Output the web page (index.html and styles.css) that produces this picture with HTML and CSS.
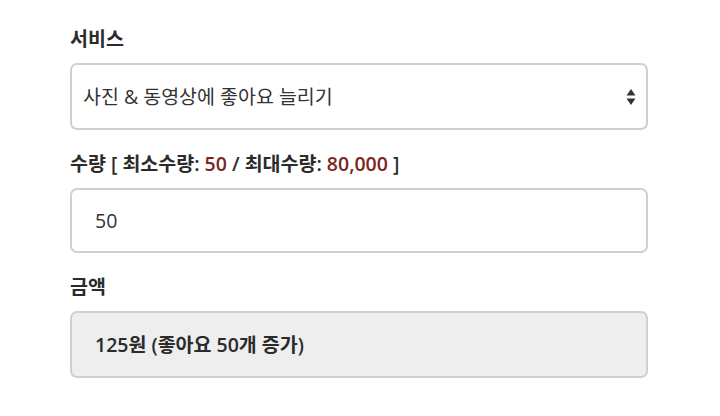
FILE: index.html
```html
<!DOCTYPE html>
<html lang="ko">
<head>
<meta charset="utf-8">
<link rel="stylesheet" href="styles.css">
</head>
<body>
<form class="order-form">
  <div class="field">
    <label class="field-label">서비스</label>
    <div class="box select-box">
      <span class="box-text">사진 &amp; 동영상에 좋아요 늘리기</span>
      <svg class="select-arrows" width="10" height="18" viewBox="0 0 10 18">
        <path d="M5 1 L9.5 7.5 L0.5 7.5 Z" fill="#333"/>
        <path d="M5 17 L9.5 10.5 L0.5 10.5 Z" fill="#333"/>
      </svg>
    </div>
  </div>
  <div class="field">
    <label class="field-label">수량 [ 최소수량: <span class="accent">50</span> / 최대수량: <span class="accent">80,000</span> ]</label>
    <div class="box input-box">
      <span class="box-text">50</span>
    </div>
  </div>
  <div class="field">
    <label class="field-label">금액</label>
    <div class="box readonly-box">
      <span class="box-text strong">125원 (좋아요 50개 증가)</span>
    </div>
  </div>
</form>
</body>
</html>
```
FILE: styles.css
```css
html, body {
  margin: 0;
  padding: 0;
  background: #fff;
}
body {
  font-family: "Open Sans", "Noto Sans CJK KR", sans-serif;
  color: #333;
}
.order-form {
  width: 578px;
  margin-left: 70px;
  padding-top: 27px;
  display: flex;
  flex-direction: column;
  gap: 22px;
}
.field {
  display: flex;
  flex-direction: column;
  gap: 12px;
}
.field-label {
  font-size: 19.5px;
  font-weight: 600;
  line-height: 24px;
  color: #2b2b2b;
}
.accent {
  color: #7d2424;
}
.box {
  box-sizing: border-box;
  height: 67px;
  border: 2px solid #d0d0d0;
  border-radius: 7px;
  display: flex;
  align-items: center;
  justify-content: space-between;
}
.select-box {
  padding: 0 10px 0 11px;
}
.input-box {
  height: 65px;
  padding: 0 23px;
}
.readonly-box {
  padding: 0 23px;
  background: #eeeeee;
}
.box-text {
  font-size: 19.5px;
  line-height: 24px;
  color: #333;
}
.strong {
  font-weight: 600;
  color: #2b2b2b;
}
.select-arrows {
  display: block;
}
```
